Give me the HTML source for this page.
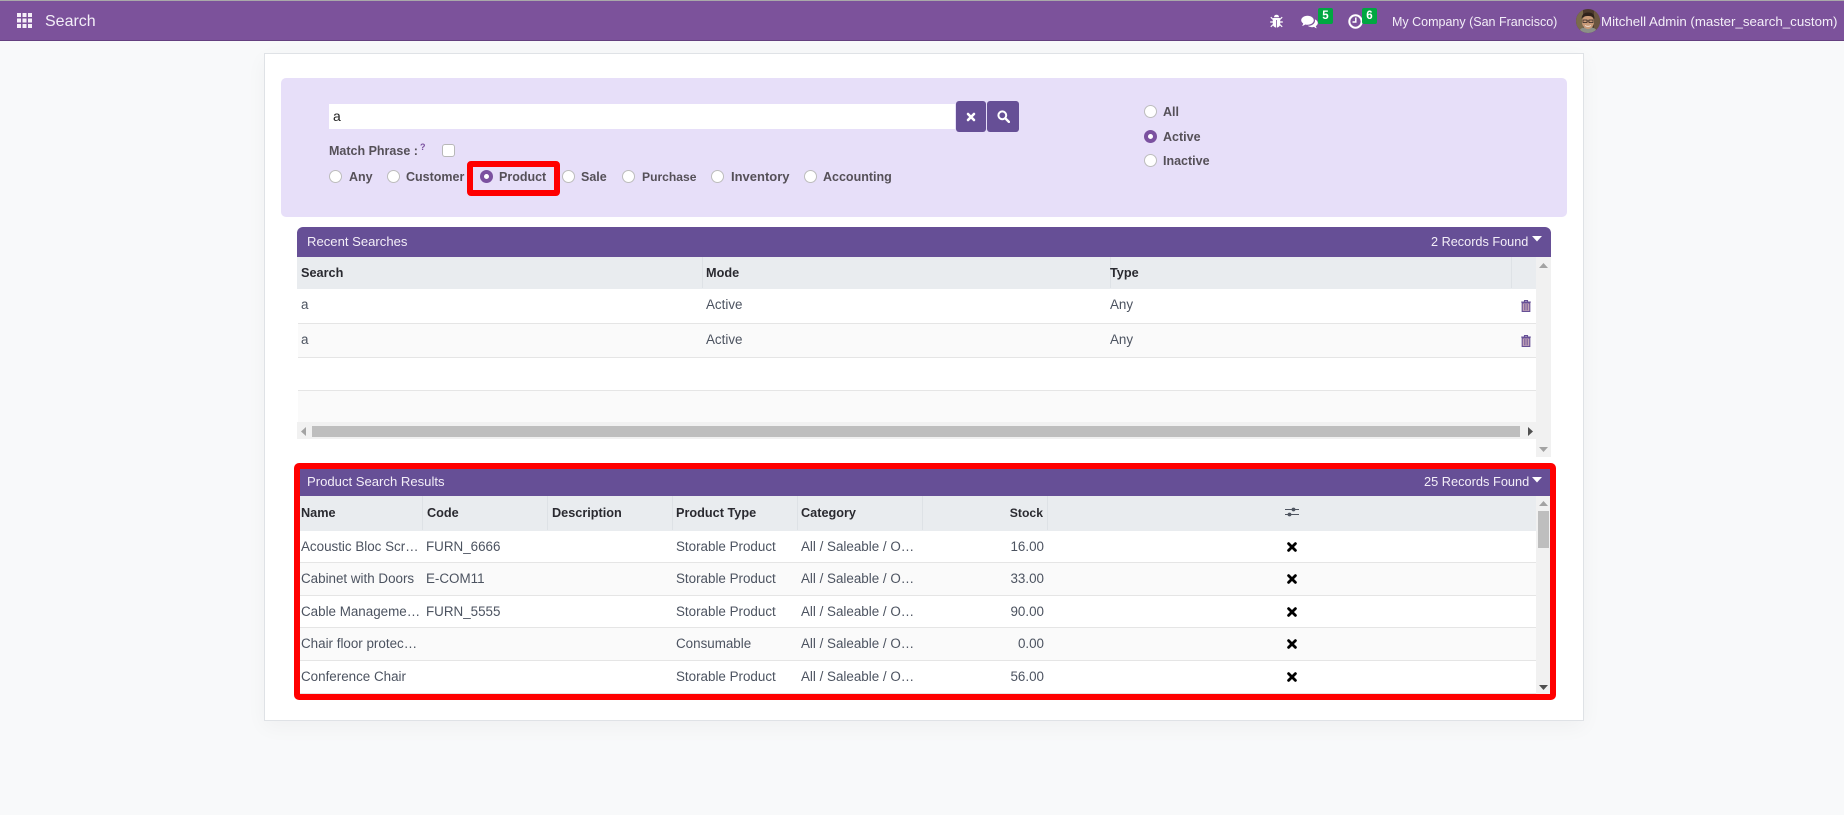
<!DOCTYPE html>
<html lang="en">
<head>
<meta charset="utf-8">
<title>Search</title>
<style>
html,body{margin:0;padding:0;width:1844px;height:815px;overflow:hidden;background:#f8f9fa;font-family:"Liberation Sans",Arial,sans-serif;}
div,span,svg{position:absolute;display:block;box-sizing:border-box;}
.t{white-space:nowrap;line-height:20px;height:20px;font-size:13.4px;color:#4c5360;}
.w{color:#f3eef8;}
.h{font-weight:bold;font-size:12.7px;color:#2a2a30;}
.l{font-weight:bold;font-size:12.5px;color:#555058;}
.r{text-align:right;}
.rd{width:13px;height:13px;border-radius:50%;background:#fff;border:1px solid #bdbdbd;}
.on{background:#fff;border:4px solid #7b51a0;}
.row{background:#fff;border-bottom:1px solid #e5e5e5;}
.alt{background:#fafafa;}
.dv{width:1px;background:#dee2e6;}
</style>
</head>
<body>
<div style="left:0;top:0;width:1844px;height:1px;background:#a9a9a9"></div>
<div style="left:0;top:1px;width:1844px;height:40px;background:#7c529b;border-bottom:1px solid #64407f"></div>

<svg style="left:17px;top:13px" width="15" height="15" viewBox="0 0 15 15" fill="#f6f0f9"><rect x="0" y="0" width="4" height="4"/><rect x="5.5" y="0" width="4" height="4"/><rect x="11" y="0" width="4" height="4"/><rect x="0" y="5.5" width="4" height="4"/><rect x="5.5" y="5.5" width="4" height="4"/><rect x="11" y="5.5" width="4" height="4"/><rect x="0" y="11" width="4" height="4"/><rect x="5.5" y="11" width="4" height="4"/><rect x="11" y="11" width="4" height="4"/></svg>
<span class="t w" style="left:45px;top:12px;font-size:16px">Search</span>

<svg style="left:1270px;top:14px" width="13" height="14" viewBox="0 0 13 14" fill="#fff"><path d="M4 3.2C4 1.6 5 .8 6.5.8S9 1.6 9 3.2z"/><path d="M3.2 4h6.6l.4 1v5.2C10.2 12 8.5 13.4 6.9 13.5V6H6.1v7.5C4.5 13.4 2.8 12 2.8 10.2V5z"/><path d="M.8 3.2l2.4 2.3M12.2 3.2L9.8 5.5M.2 8h2.8M10 8h2.8M.8 12.8l2.4-2.3M12.2 12.8l-2.4-2.3" stroke="#fff" stroke-width="1.2" fill="none"/></svg>
<svg style="left:1301px;top:15px" width="17" height="14" viewBox="0 0 17 14" fill="#fff"><path d="M6.5.8C10 .8 12.8 2.8 12.8 5.3S10 9.8 6.5 9.8c-.8 0-1.5-.1-2.2-.3C3.2 10.3 2 10.8.9 11c.6-.7 1.100-1.500 1.300-2.500C1 7.700.2 6.600.2 5.300.2 2.800 3 .8 6.500.8z"/><path d="M13.8 4.400c1.800.7 3 2 3 3.600 0 1.300-.8 2.400-2 3.100.2.900.6 1.600 1.200 2.200-1.100-.1-2.100-.6-3-1.400-.6.200-1.300.3-2 .3-1.700 0-3.200-.5-4.200-1.400 4 .1 7.200-2 7.200-5.200z"/></svg>
<div style="left:1318px;top:8px;width:15px;height:16px;background:#00a741;border-radius:2px"></div>
<span class="t" style="left:1318px;top:6px;width:15px;text-align:center;color:#fff;font-size:11.5px;font-weight:bold">5</span>
<svg style="left:1348px;top:14px" width="15" height="15" viewBox="0 0 15 15" fill="none" stroke="#fff"><circle cx="7.5" cy="7.5" r="6.2" stroke-width="2"/><path d="M7.8 3.5V8H4.5" stroke-width="1.5"/></svg>
<div style="left:1362px;top:8px;width:15px;height:16px;background:#00a741;border-radius:2px"></div>
<span class="t" style="left:1362px;top:6px;width:15px;text-align:center;color:#fff;font-size:11.5px;font-weight:bold">6</span>
<span class="t w" style="left:1392px;top:12px;font-size:12.5px">My Company (San Francisco)</span>
<svg style="left:1576px;top:9px" width="24" height="24" viewBox="0 0 24 24"><defs><clipPath id="c"><circle cx="12" cy="12" r="12"/></clipPath></defs><g clip-path="url(#c)"><rect width="24" height="24" fill="#4d3a2c"/><rect x="0" y="0" width="7" height="24" fill="#7a6a4c"/><rect x="18" y="0" width="6" height="24" fill="#6a5540"/><path d="M3 24c0-4 3-6 9-6s9 2 9 6z" fill="#8c9088"/><ellipse cx="12" cy="13" rx="6" ry="7" fill="#c99a78"/><path d="M5.5 10C6 4.5 9 3.5 12.500 3.500S18.500 5 18.500 10c-1.500-2.500-4-3-6.500-3s-5 .5-6.500 3z" fill="#2e221b"/><path d="M7 11h4v2.500H7zM13 11h4v2.500h-4zM11 12h2" fill="none" stroke="#2b2320" stroke-width=".7"/><path d="M9 16.500c2 1.200 4 1.200 6 0" stroke="#f1e3d8" stroke-width="1" fill="none"/></g></svg>
<span class="t w" style="left:1601px;top:12px;font-size:13.3px">Mitchell Admin (master_search_custom)</span>

<!-- main card -->
<div style="left:264px;top:53px;width:1320px;height:668px;background:#fff;border:1px solid #dfe2e6;box-shadow:0 6px 20px rgba(0,0,0,.04)"></div>
<div style="left:281px;top:78px;width:1286px;height:139px;background:#e7dff9;border-radius:5px"></div>

<div style="left:329px;top:104px;width:626px;height:25px;background:#fff"></div>
<span class="t" style="left:333px;top:106px;color:#222;font-size:14px">a</span>
<div style="left:956px;top:101px;width:30px;height:31px;background:#664f96;border-radius:3px"></div>
<svg style="left:966px;top:112px" width="10" height="10" viewBox="0 0 10 10"><path d="M2 2L8 8M8 2L2 8" stroke="#fff" stroke-width="2.6" stroke-linecap="round"/></svg>
<div style="left:987px;top:101px;width:32px;height:31px;background:#664f96;border-radius:3px"></div>
<svg style="left:997px;top:110px" width="13" height="13" viewBox="0 0 13 13" fill="none" stroke="#fff"><circle cx="5.3" cy="5.3" r="3.9" stroke-width="2"/><path d="M8.3 8.300l3.600 3.600" stroke-width="2.4" stroke-linecap="round"/></svg>

<span class="t l" style="left:329px;top:141px">Match Phrase :</span>
<span class="t" style="left:420px;top:137px;color:#7b51a0;font-size:9px;font-weight:bold">?</span>
<div style="left:442px;top:144px;width:13px;height:13px;background:#fff;border:1px solid #b8b8b8;border-radius:3px"></div>

<div class="rd" style="left:329px;top:170px"></div><span class="t l" style="left:349px;top:167px">Any</span>
<div class="rd" style="left:387px;top:170px"></div><span class="t l" style="left:406px;top:167px">Customer</span>
<div class="rd on" style="left:480px;top:170px"></div><span class="t l" style="left:499px;top:167px">Product</span>
<div class="rd" style="left:562px;top:170px"></div><span class="t l" style="left:581px;top:167px">Sale</span>
<div class="rd" style="left:622px;top:170px"></div><span class="t l" style="left:642px;top:167px;font-size:12.1px">Purchase</span>
<div class="rd" style="left:711px;top:170px"></div><span class="t l" style="left:731px;top:167px;font-size:13px">Inventory</span>
<div class="rd" style="left:804px;top:170px"></div><span class="t l" style="left:823px;top:167px">Accounting</span>
<div style="left:467px;top:161px;width:93px;height:35px;border:6px solid #f00;border-radius:4px"></div>

<div class="rd" style="left:1144px;top:105px"></div><span class="t l" style="left:1163px;top:102px">All</span>
<div class="rd on" style="left:1144px;top:130px"></div><span class="t l" style="left:1163px;top:127px">Active</span>
<div class="rd" style="left:1144px;top:154px"></div><span class="t l" style="left:1163px;top:151px">Inactive</span>

<!-- Recent Searches -->
<div style="left:297px;top:227px;width:1254px;height:30px;background:#664f96;border-radius:6px 6px 0 0"></div>
<span class="t w" style="left:307px;top:232px;font-size:13.1px">Recent Searches</span>
<span class="t w" style="left:1431px;top:232px;font-size:12.7px">2 Records Found</span>
<svg style="left:1532px;top:236px" width="10" height="6" viewBox="0 0 10 6"><path d="M0 0h10L5 5.5z" fill="#fff"/></svg>

<div style="left:297px;top:257px;width:1239px;height:32px;background:#e9ecef"></div>
<div class="dv" style="left:702px;top:257px;height:31px"></div>
<div class="dv" style="left:1110px;top:257px;height:31px"></div>
<div class="dv" style="left:1511px;top:257px;height:31px"></div>
<span class="t h" style="left:301px;top:263px">Search</span>
<span class="t h" style="left:706px;top:263px">Mode</span>
<span class="t h" style="left:1110px;top:263px">Type</span>

<div class="row" style="left:298px;top:289px;width:1238px;height:35px"></div>
<div class="row alt" style="left:298px;top:324px;width:1238px;height:34px"></div>
<div class="row" style="left:298px;top:358px;width:1238px;height:33px"></div>
<div class="row alt" style="left:298px;top:391px;width:1238px;height:31px;border-bottom:0"></div>

<span class="t" style="left:301px;top:295px">a</span><span class="t" style="left:706px;top:295px">Active</span><span class="t" style="left:1110px;top:295px">Any</span>
<span class="t" style="left:301px;top:330px">a</span><span class="t" style="left:706px;top:330px">Active</span><span class="t" style="left:1110px;top:330px">Any</span>

<svg style="left:1521px;top:300px" width="10" height="12" viewBox="0 0 10 12"><path d="M3.5 1.6V.6h3v1M.2 2.100h9.600" stroke="#664f96" stroke-width="1.100" fill="none"/><path d="M1.200 3h7.600v8.400H1.200z" fill="#c8a8b8" stroke="#664f96" stroke-width="1.100"/><path d="M3.300 4v6.300M5 4v6.300M6.700 4v6.300" stroke="#664f96" stroke-width=".7"/></svg>
<svg style="left:1521px;top:335px" width="10" height="12" viewBox="0 0 10 12"><path d="M3.5 1.6V.6h3v1M.2 2.100h9.600" stroke="#664f96" stroke-width="1.100" fill="none"/><path d="M1.200 3h7.600v8.400H1.200z" fill="#c8a8b8" stroke="#664f96" stroke-width="1.100"/><path d="M3.300 4v6.300M5 4v6.300M6.700 4v6.300" stroke="#664f96" stroke-width=".7"/></svg>

<div style="left:297px;top:422px;width:1239px;height:17px;background:#f1f1f1"></div>
<div style="left:312px;top:426px;width:1208px;height:11px;background:#bebebe"></div>
<svg style="left:301px;top:427px" width="6" height="9" viewBox="0 0 6 9"><path d="M5 0v9L0 4.5z" fill="#a3a3a3"/></svg>
<svg style="left:1527px;top:427px" width="6" height="9" viewBox="0 0 6 9"><path d="M1 0v9l5-4.500z" fill="#505050"/></svg>
<div style="left:1536px;top:257px;width:15px;height:200px;background:#f1f1f1"></div>
<svg style="left:1539px;top:263px" width="9" height="6" viewBox="0 0 9 6"><path d="M0 5h9L4.500 0z" fill="#a3a3a3"/></svg>
<svg style="left:1539px;top:447px" width="9" height="6" viewBox="0 0 9 6"><path d="M0 0h9L4.500 5z" fill="#a3a3a3"/></svg>

<!-- Product results -->
<div style="left:300px;top:469px;width:1250px;height:27px;background:#664f96"></div>
<span class="t w" style="left:307px;top:472px;font-size:13.1px">Product Search Results</span>
<span class="t w" style="left:1424px;top:472px;font-size:12.8px">25 Records Found</span>
<svg style="left:1532px;top:477px" width="10" height="6" viewBox="0 0 10 6"><path d="M0 0h10L5 5.500z" fill="#fff"/></svg>

<div style="left:300px;top:496px;width:1236px;height:35px;background:#e9ecef"></div>
<div class="dv" style="left:422px;top:496px;height:34px"></div>
<div class="dv" style="left:547px;top:496px;height:34px"></div>
<div class="dv" style="left:672px;top:496px;height:34px"></div>
<div class="dv" style="left:797px;top:496px;height:34px"></div>
<div class="dv" style="left:922px;top:496px;height:34px"></div>
<div class="dv" style="left:1047px;top:496px;height:34px"></div>
<span class="t h" style="left:301px;top:503px">Name</span>
<span class="t h" style="left:427px;top:503px">Code</span>
<span class="t h" style="left:552px;top:503px">Description</span>
<span class="t h" style="left:676px;top:503px">Product Type</span>
<span class="t h" style="left:801px;top:503px">Category</span>
<span class="t h r" style="left:943px;top:503px;width:100px;font-size:12.2px">Stock</span>
<svg style="left:1285px;top:506px" width="14" height="12" viewBox="0 0 14 12" stroke="#4f5560" fill="#4f5560"><path d="M0 3.500h14M0 8.500h14" stroke-width="1" fill="none"/><circle cx="8.500" cy="3.500" r="1.900" stroke="none"/><circle cx="4.500" cy="8.500" r="1.900" stroke="none"/></svg>

<div class="row" style="left:300px;top:531px;width:1236px;height:32px"></div>
<div class="row alt" style="left:300px;top:563px;width:1236px;height:33px"></div>
<div class="row" style="left:300px;top:596px;width:1236px;height:32px"></div>
<div class="row alt" style="left:300px;top:628px;width:1236px;height:33px"></div>
<div class="row" style="left:300px;top:661px;width:1236px;height:33px"></div>

<span class="t" style="left:301px;top:537px">Acoustic Bloc Scr…</span><span class="t" style="left:426px;top:537px">FURN_6666</span><span class="t" style="left:676px;top:537px">Storable Product</span><span class="t" style="left:801px;top:537px">All / Saleable / O…</span><span class="t r" style="left:944px;top:537px;width:100px">16.00</span>
<span class="t" style="left:301px;top:569px">Cabinet with Doors</span><span class="t" style="left:426px;top:569px">E-COM11</span><span class="t" style="left:676px;top:569px">Storable Product</span><span class="t" style="left:801px;top:569px">All / Saleable / O…</span><span class="t r" style="left:944px;top:569px;width:100px">33.00</span>
<span class="t" style="left:301px;top:602px">Cable Manageme…</span><span class="t" style="left:426px;top:602px">FURN_5555</span><span class="t" style="left:676px;top:602px">Storable Product</span><span class="t" style="left:801px;top:602px">All / Saleable / O…</span><span class="t r" style="left:944px;top:602px;width:100px">90.00</span>
<span class="t" style="left:301px;top:634px">Chair floor protec…</span><span class="t" style="left:676px;top:634px">Consumable</span><span class="t" style="left:801px;top:634px">All / Saleable / O…</span><span class="t r" style="left:944px;top:634px;width:100px">0.00</span>
<span class="t" style="left:301px;top:667px">Conference Chair</span><span class="t" style="left:676px;top:667px">Storable Product</span><span class="t" style="left:801px;top:667px">All / Saleable / O…</span><span class="t r" style="left:944px;top:667px;width:100px">56.00</span>

<svg style="left:1287px;top:542px" width="10" height="10" viewBox="0 0 10 10"><path d="M1.600 1.600L8.400 8.400M8.400 1.600L1.600 8.400" stroke="#000" stroke-width="2.800" stroke-linecap="round"/></svg>
<svg style="left:1287px;top:574px" width="10" height="10" viewBox="0 0 10 10"><path d="M1.600 1.600L8.400 8.400M8.400 1.600L1.600 8.400" stroke="#000" stroke-width="2.800" stroke-linecap="round"/></svg>
<svg style="left:1287px;top:607px" width="10" height="10" viewBox="0 0 10 10"><path d="M1.600 1.600L8.400 8.400M8.400 1.600L1.600 8.400" stroke="#000" stroke-width="2.800" stroke-linecap="round"/></svg>
<svg style="left:1287px;top:639px" width="10" height="10" viewBox="0 0 10 10"><path d="M1.600 1.600L8.400 8.400M8.400 1.600L1.600 8.400" stroke="#000" stroke-width="2.800" stroke-linecap="round"/></svg>
<svg style="left:1287px;top:672px" width="10" height="10" viewBox="0 0 10 10"><path d="M1.600 1.600L8.400 8.400M8.400 1.600L1.600 8.400" stroke="#000" stroke-width="2.800" stroke-linecap="round"/></svg>

<div style="left:1536px;top:496px;width:14px;height:198px;background:#f1f1f1"></div>
<div style="left:1538px;top:511px;width:11px;height:37px;background:#bebebe"></div>
<svg style="left:1539px;top:501px" width="9" height="6" viewBox="0 0 9 6"><path d="M0 5h9L4.500 0z" fill="#a3a3a3"/></svg>
<svg style="left:1539px;top:685px" width="9" height="6" viewBox="0 0 9 6"><path d="M0 0h9L4.500 5z" fill="#505050"/></svg>

<div style="left:294px;top:463px;width:1262px;height:237px;border:6px solid #f00;border-radius:5px"></div>
</body>
</html>
